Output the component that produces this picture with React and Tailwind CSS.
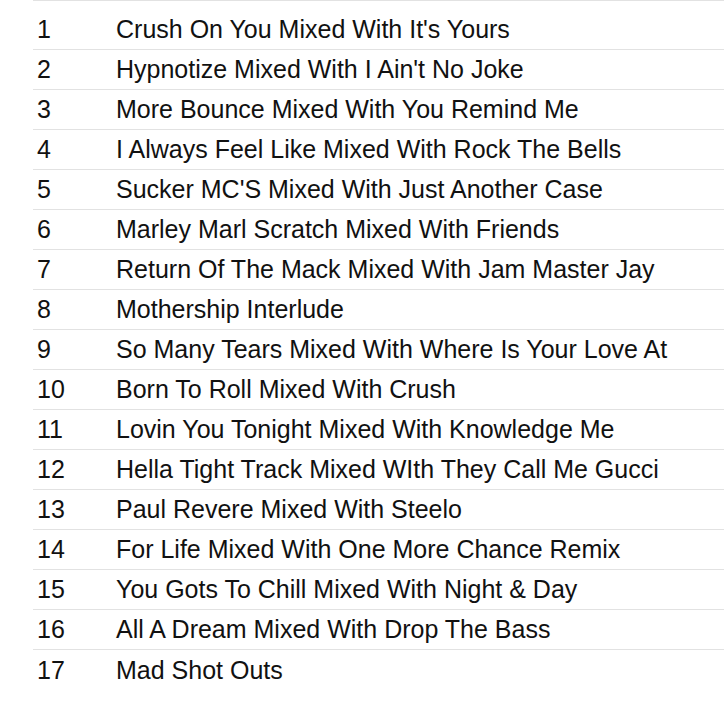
const tracks = [
  "Crush On You Mixed With It's Yours",
  "Hypnotize Mixed With I Ain't No Joke",
  "More Bounce Mixed With You Remind Me",
  "I Always Feel Like Mixed With Rock The Bells",
  "Sucker MC'S Mixed With Just Another Case",
  "Marley Marl Scratch Mixed With Friends",
  "Return Of The Mack Mixed With Jam Master Jay",
  "Mothership Interlude",
  "So Many Tears Mixed With Where Is Your Love At",
  "Born To Roll Mixed With Crush",
  "Lovin You Tonight Mixed With Knowledge Me",
  "Hella Tight Track Mixed WIth They Call Me Gucci",
  "Paul Revere Mixed With Steelo",
  "For Life Mixed With One More Chance Remix",
  "You Gots To Chill Mixed With Night & Day",
  "All A Dream Mixed With Drop The Bass",
  "Mad Shot Outs",
];

export default function App() {
  return (
    <div
      className="w-[724px] h-[709px] bg-white overflow-hidden text-[#111] text-[25px] leading-none"
      style={{ fontFamily: '"Liberation Sans", Arial, sans-serif' }}
    >
      <div className="ml-[33px] border-t border-[#e2e2e2] pt-[9px]">
        {tracks.map((t, i) => (
          <div
            key={i}
            className={`flex items-center h-[40px] ${i < tracks.length - 1 ? "border-b border-[#e2e2e2]" : ""}`}
          >
            <span className="w-[83px] pl-[4px]">{i + 1}</span>
            <span className="whitespace-nowrap">{t}</span>
          </div>
        ))}
      </div>
    </div>
  );
}
